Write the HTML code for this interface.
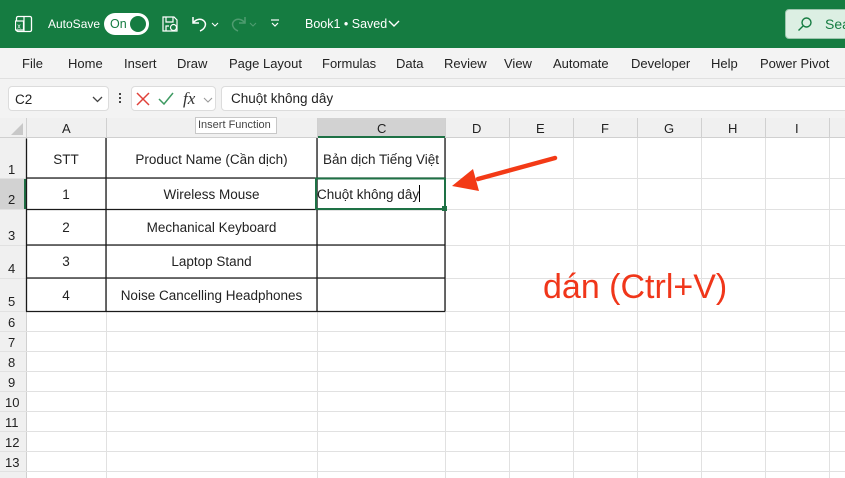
<!DOCTYPE html>
<html><head><meta charset="utf-8"><style>
*{margin:0;padding:0;box-sizing:border-box}
body{width:845px;height:478px;overflow:hidden;background:#fff;font-family:"Liberation Sans","Noto Sans CJK SC",sans-serif;position:relative;color:#222}
.a{position:absolute}
.tb{left:0;top:0;width:845px;height:48px;background:#157c41;color:#fff;font-size:13px}
.rib{left:0;top:48px;width:845px;height:31px;background:#f3f3f3;border-bottom:1px solid #e0e0e0;font-size:13px;color:#222}
.rib span{position:absolute;top:8px}
.fb{left:0;top:79px;width:845px;height:39px;background:#f3f3f3}
.box{background:#fff;border:1px solid #dcdcdc;border-radius:4px}
.hdr{background:#f0f0f0;font-size:13px;color:#222;text-align:center}
.gl{background:#e1e1e1}
.cell{font-size:13.5px;color:#222;text-align:center;position:absolute}
</style></head><body>
<div class="a tb">
  <svg class="a" style="left:15px;top:15px" width="18" height="18" viewBox="0 0 18 18"><rect x="1.5" y="1.5" width="15" height="15" rx="1.5" fill="none" stroke="#fff" stroke-width="1.3"/><line x1="9" y1="1.5" x2="9" y2="16.5" stroke="#fff" stroke-width="1.2"/><rect x="0.5" y="6" width="8" height="9" fill="#157c41" stroke="#fff" stroke-width="1.2"/><text x="2.3" y="13.5" font-size="7" fill="#fff" font-family="Liberation Sans">x</text></svg>
  <span class="a" style="left:48px;top:17px;font-size:12px">AutoSave</span>
  <div class="a" style="left:104px;top:13px;width:45px;height:22px;border-radius:11px;background:#fff"></div>
  <span class="a" style="left:110px;top:17px;color:#157c41;font-size:12.5px">On</span>
  <div class="a" style="left:130px;top:16px;width:16px;height:16px;border-radius:8px;background:#157c41"></div>
  <svg class="a" style="left:161px;top:15px" width="18" height="18" viewBox="0 0 18 18" fill="none" stroke="#fff" stroke-width="1.2"><path d="M2 2h11l3 3v11H2z"/><path d="M5 2v5h7V2"/><path d="M5 16v-5h3"/><circle cx="12.5" cy="12.5" r="3"/></svg>
  <svg class="a" style="left:190px;top:14px" width="30" height="20" viewBox="0 0 30 20" fill="none" stroke="#fff" stroke-width="1.5"><path d="M3 3v6h6"/><path d="M3 9c3-4 8-5 11-2 3 3 1 8-4 10"/><path d="M22 9l3 3 3-3" stroke-width="1.1"/></svg>
  <svg class="a" style="left:228px;top:14px" width="30" height="20" viewBox="0 0 30 20" fill="none" stroke="#4f9c70" stroke-width="1.5"><path d="M17 3v6h-6"/><path d="M17 9c-3-4-8-5-11-2-3 3-1 8 4 10"/><path d="M22 9l3 3 3-3" stroke-width="1.1"/></svg>
  <svg class="a" style="left:270px;top:18px" width="10" height="10" viewBox="0 0 10 10" fill="none" stroke="#fff" stroke-width="1.2"><line x1="1" y1="2" x2="9" y2="2"/><path d="M2 5l3 3 3-3"/></svg>
  <span class="a" style="left:305px;top:17px;font-size:12.5px">Book1 • Saved</span>
  <svg class="a" style="left:388px;top:20px" width="12" height="8" viewBox="0 0 12 8" fill="none" stroke="#fff" stroke-width="1.4"><path d="M1 1l5 5 5-5"/></svg>
  <div class="a" style="left:785px;top:9px;width:70px;height:30px;border-radius:4px;background:#dcefe3;border:1px solid #9cc5ad"></div>
  <svg class="a" style="left:797px;top:16px" width="16" height="16" viewBox="0 0 16 16" fill="none" stroke="#157c41" stroke-width="1.4"><circle cx="9.5" cy="6.5" r="4.5"/><line x1="6.3" y1="9.7" x2="1.5" y2="14.5"/></svg>
  <span class="a" style="left:825px;top:16px;color:#157c41;font-size:14px">Sea</span>
</div>
<div class="a rib">
  <span style="left:22px">File</span><span style="left:68px">Home</span><span style="left:124px">Insert</span><span style="left:177px">Draw</span><span style="left:229px">Page Layout</span><span style="left:322px">Formulas</span><span style="left:396px">Data</span><span style="left:444px">Review</span><span style="left:504px">View</span><span style="left:553px">Automate</span><span style="left:631px">Developer</span><span style="left:711px">Help</span><span style="left:760px">Power Pivot</span>
</div>
<div class="a fb">
  <div class="a box" style="left:8px;top:7px;width:101px;height:25px"></div>
  <span class="a" style="left:15px;top:13px;font-size:13.5px">C2</span>
  <svg class="a" style="left:92px;top:17px" width="11" height="7" viewBox="0 0 11 7" fill="none" stroke="#444" stroke-width="1.3"><path d="M1 1l4.5 4.5L10 1"/></svg>
  <div class="a" style="left:119px;top:14px;width:2px;height:2px;background:#444;box-shadow:0 4px #444,0 8px #444"></div>
  <div class="a box" style="left:131px;top:7px;width:85px;height:25px"></div>
  <svg class="a" style="left:136px;top:13px" width="14" height="14" viewBox="0 0 14 14" stroke="#e0413a" stroke-width="1.5"><path d="M1 1l12 12M13 1L1 13"/></svg>
  <svg class="a" style="left:158px;top:13px" width="16" height="14" viewBox="0 0 16 14" fill="none" stroke="#3e9a62" stroke-width="1.5"><path d="M1 7l5 5 9-11"/></svg>
  <span class="a" style="left:183px;top:10px;font-family:'Liberation Serif',serif;font-style:italic;font-size:17px;color:#333">fx</span>
  <svg class="a" style="left:203px;top:18px" width="10" height="6" viewBox="0 0 10 6" fill="none" stroke="#999" stroke-width="1.1"><path d="M1 1l4 4 4-4"/></svg>
  <div class="a box" style="left:221px;top:7px;width:640px;height:25px"></div>
  <span class="a" style="left:231px;top:12px;font-size:13.5px">Chuột không dây</span>
</div>
<div class="a hdr" style="left:0;top:118px;width:845px;height:20px;border-bottom:1px solid #d0d0d0"></div>
<svg class="a" style="left:10px;top:122px" width="14" height="14"><path d="M13 1V13H1z" fill="#c8c8c8"/></svg>
<div class="a" style="left:317px;top:118px;width:128px;height:20px;background:#d2d2d2;border-bottom:2px solid #1e7145"></div>
<div class="a" style="left:0;top:118px;width:845px;height:20px;font-size:13px">
 <span class="a" style="left:62px;top:3px">A</span>
 <span class="a" style="left:377px;top:3px">C</span>
 <span class="a" style="left:472px;top:3px">D</span>
 <span class="a" style="left:536px;top:3px">E</span>
 <span class="a" style="left:601px;top:3px">F</span>
 <span class="a" style="left:664px;top:3px">G</span>
 <span class="a" style="left:728px;top:3px">H</span>
 <span class="a" style="left:795px;top:3px">I</span>
</div>
<div class="a" style="left:26px;top:118px;width:1px;height:360px;background:#d0d0d0"></div>
<div class="a" style="left:106px;top:118px;width:1px;height:20px;background:#d0d0d0"></div>
<div class="a" style="left:317px;top:118px;width:1px;height:20px;background:#d0d0d0"></div>
<div class="a" style="left:445px;top:118px;width:1px;height:20px;background:#d0d0d0"></div>
<div class="a" style="left:509px;top:118px;width:1px;height:20px;background:#d0d0d0"></div>
<div class="a" style="left:573px;top:118px;width:1px;height:20px;background:#d0d0d0"></div>
<div class="a" style="left:637px;top:118px;width:1px;height:20px;background:#d0d0d0"></div>
<div class="a" style="left:701px;top:118px;width:1px;height:20px;background:#d0d0d0"></div>
<div class="a" style="left:765px;top:118px;width:1px;height:20px;background:#d0d0d0"></div>
<div class="a" style="left:829px;top:118px;width:1px;height:20px;background:#d0d0d0"></div>
<div class="a hdr" style="left:0;top:138px;width:26px;height:340px"></div>
<div class="a" style="left:0;top:178px;width:26px;height:31px;background:#d2d2d2;border-right:2px solid #1e7145"></div>
<div class="a gl" style="left:106px;top:138px;width:1px;height:340px"></div>
<div class="a gl" style="left:317px;top:138px;width:1px;height:340px"></div>
<div class="a gl" style="left:445px;top:138px;width:1px;height:340px"></div>
<div class="a gl" style="left:509px;top:138px;width:1px;height:340px"></div>
<div class="a gl" style="left:573px;top:138px;width:1px;height:340px"></div>
<div class="a gl" style="left:637px;top:138px;width:1px;height:340px"></div>
<div class="a gl" style="left:701px;top:138px;width:1px;height:340px"></div>
<div class="a gl" style="left:765px;top:138px;width:1px;height:340px"></div>
<div class="a gl" style="left:829px;top:138px;width:1px;height:340px"></div>
<div class="a gl" style="left:0;top:178px;width:845px;height:1px"></div>
<div class="a gl" style="left:0;top:209px;width:845px;height:1px"></div>
<div class="a gl" style="left:0;top:245px;width:845px;height:1px"></div>
<div class="a gl" style="left:0;top:278px;width:845px;height:1px"></div>
<div class="a gl" style="left:0;top:311px;width:845px;height:1px"></div>
<div class="a gl" style="left:0;top:331px;width:845px;height:1px"></div>
<div class="a gl" style="left:0;top:351px;width:845px;height:1px"></div>
<div class="a gl" style="left:0;top:371px;width:845px;height:1px"></div>
<div class="a gl" style="left:0;top:391px;width:845px;height:1px"></div>
<div class="a gl" style="left:0;top:411px;width:845px;height:1px"></div>
<div class="a gl" style="left:0;top:431px;width:845px;height:1px"></div>
<div class="a gl" style="left:0;top:451px;width:845px;height:1px"></div>
<div class="a gl" style="left:0;top:471px;width:845px;height:1px"></div>
<div class="a" style="left:0;top:0;width:26px;font-size:13px">
 <span class="a" style="left:8px;top:162px">1</span>
 <span class="a" style="left:8px;top:192px">2</span>
 <span class="a" style="left:8px;top:228px">3</span>
 <span class="a" style="left:8px;top:261px">4</span>
 <span class="a" style="left:8px;top:294px">5</span>
 <span class="a" style="left:8px;top:315px">6</span>
 <span class="a" style="left:8px;top:335px">7</span>
 <span class="a" style="left:8px;top:355px">8</span>
 <span class="a" style="left:8px;top:375px">9</span>
 <span class="a" style="left:5px;top:395px">10</span>
 <span class="a" style="left:5px;top:415px">11</span>
 <span class="a" style="left:5px;top:435px">12</span>
 <span class="a" style="left:5px;top:455px">13</span>
</div>
<svg class="a" style="left:0;top:0" width="845" height="478">
 <g stroke="#1a1a1a" stroke-width="1.3" fill="none">
  <path d="M26.5 138.5V311.5M106 138V311.5M317 138V311.5M445 138V311.5"/>
  <path d="M26 178H445M26 209.5H445M26 245H445M26 278H445M26 311.5H445"/>
 </g>
 <rect x="316" y="178.5" width="129" height="30.5" fill="none" stroke="#1e7145" stroke-width="2"/>
 <rect x="442" y="206" width="5" height="5" fill="#1e7145"/>
 <line x1="555" y1="158" x2="478" y2="179" stroke="#f33a16" stroke-width="4.5" stroke-linecap="round"/>
 <path d="M452 186L473 169L479 191Z" fill="#f33a16"/>
</svg>
<div class="cell" style="left:26px;top:152px;width:80px">STT</div>
<div class="cell" style="left:106px;top:152px;width:211px">Product Name (Cần dịch)</div>
<div class="cell" style="left:317px;top:152px;width:128px">Bản dịch Tiếng Việt</div>
<div class="cell" style="left:26px;top:187px;width:80px">1</div>
<div class="cell" style="left:106px;top:187px;width:211px">Wireless Mouse</div>
<div class="cell" style="left:317px;top:187px;text-align:left">Chuột không dây</div>
<div class="a" style="left:419px;top:185px;width:1px;height:17px;background:#000"></div>
<div class="cell" style="left:26px;top:220px;width:80px">2</div>
<div class="cell" style="left:106px;top:220px;width:211px">Mechanical Keyboard</div>
<div class="cell" style="left:26px;top:254px;width:80px">3</div>
<div class="cell" style="left:106px;top:254px;width:211px">Laptop Stand</div>
<div class="cell" style="left:26px;top:288px;width:80px">4</div>
<div class="cell" style="left:106px;top:288px;width:211px">Noise Cancelling Headphones</div>
<div class="a" style="left:195px;top:117px;width:82px;height:17px;background:#fff;border:1px solid #c8c8c8;font-size:11px;color:#444;padding:1px 0 0 2px;white-space:nowrap">Insert Function</div>
<div class="a" style="left:543px;top:268px;font-size:34px;color:#f0361a;white-space:nowrap">dán (Ctrl+V)</div>
</body></html>
